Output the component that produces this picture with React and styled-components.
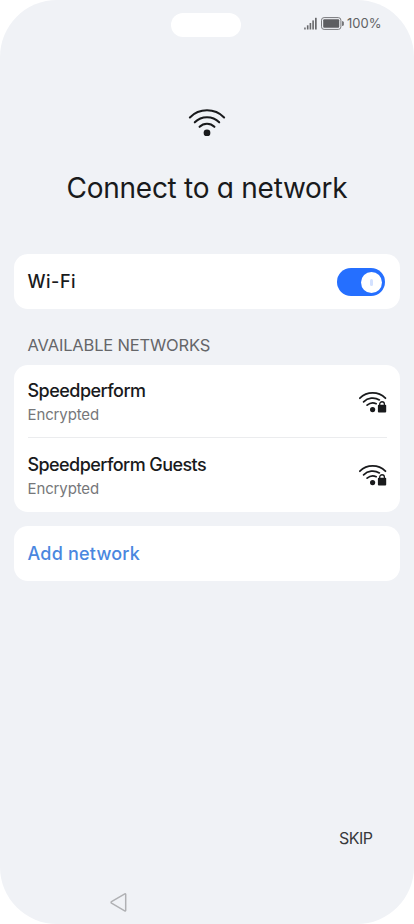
import React from "react";
import styled, { createGlobalStyle } from "styled-components";

const GlobalStyle = createGlobalStyle`
  * { box-sizing: border-box; }
  body { margin: 0; background: #fff; }
`;

const Screen = styled.main`
  width: 414px;
  height: 924px;
  background: #f0f2f6;
  border-radius: 57px;
  overflow: hidden;
  display: flex;
  flex-direction: column;
  font-family: Inter, "Noto Sans", sans-serif;
  font-feature-settings: "cv11";
  color: #191a1c;
`;

const StatusBar = styled.header`
  display: grid;
  grid-template-columns: 1fr 70px 1fr;
  height: 48px;
  padding: 12.5px 33px 0 31px;
`;

const CameraCutout = styled.div`
  grid-column: 2;
  height: 24.5px;
  border-radius: 13px;
  background: #fff;
`;

const StatusIcons = styled.div`
  display: flex;
  justify-content: flex-end;
  align-items: center;
  gap: 3px;
  height: 21px;
`;

const BatteryText = styled.span`
  width: 34px;
  font-size: 13px;
  line-height: 21px;
  letter-spacing: 0;
  color: #606164;
  white-space: nowrap;
`;

const Hero = styled.section`
  display: flex;
  flex-direction: column;
  align-items: center;
  padding-top: 56px;
  height: 206px;
`;

const Title = styled.h1`
  margin: 32px 0 0;
  font-size: 28px;
  line-height: 40px;
  font-weight: 400;
  letter-spacing: -0.27px;
  white-space: nowrap;
`;

const Card = styled.section`
  margin: 0 14px;
  padding: 0 13.5px;
  background: #fff;
  border-radius: 14px;
`;

const Row = styled.div`
  display: flex;
  align-items: center;
  justify-content: space-between;
  height: ${(p) => p.$height}px;
  padding-top: ${(p) => p.$inset || 0}px;
  border-bottom: ${(p) => (p.$divider ? "1px solid #ebecee" : "none")};
`;

const Label = styled.div`
  font-size: 18px;
  line-height: 24px;
  font-weight: 500;
  letter-spacing: ${(p) => p.$spacing || 0}px;
  color: ${(p) => (p.$link ? "#4a87df" : "inherit")};
  white-space: nowrap;
`;

const Detail = styled.div`
  font-size: 15px;
  line-height: 24px;
  letter-spacing: -0.12px;
  color: #76777a;
`;

const SectionTitle = styled.h2`
  margin: 0;
  padding: 24px 27.5px 0;
  height: 55.5px;
  font-size: 16.5px;
  line-height: 24px;
  font-weight: 400;
  letter-spacing: -0.17px;
  color: #656669;
  white-space: nowrap;
`;

const Gap = styled.div`
  height: 14px;
`;

const Toggle = styled.button`
  display: flex;
  align-items: center;
  justify-content: flex-end;
  width: 48px;
  height: 28px;
  margin-right: 1.5px;
  padding: 0 3px;
  border: 0;
  border-radius: 14px;
  background: #256fff;
`;

const Knob = styled.span`
  display: grid;
  place-items: center;
  width: 21px;
  height: 21px;
  border-radius: 50%;
  background: #fff;
`;

const KnobMark = styled.span`
  width: 2.5px;
  height: 7px;
  border-radius: 2px;
  background: #d3e1ff;
`;

const Footer = styled.footer`
  display: flex;
  flex-direction: column;
  flex: 1;
  justify-content: flex-end;
`;

const Skip = styled.button`
  align-self: flex-end;
  margin: 0 41.5px 40px 0;
  padding: 0;
  border: 0;
  background: none;
  color: #38393b;
  font: 400 16px/24px Inter, "Noto Sans", sans-serif;
  letter-spacing: -0.5px;
`;

const NavBar = styled.nav`
  height: 34px;
  padding: 0.5px 0 0 109px;
`;

const SignalIcon = () => (
  <svg width="14" height="13" viewBox="0 0 14 13" fill="#67686b">
    <rect x="0.2" y="10.5" width="1.5" height="2" />
    <rect x="2.9" y="8.3" width="1.6" height="4.2" />
    <rect x="5.6" y="6" width="1.6" height="6.5" />
    <rect x="8.3" y="3.4" width="1.6" height="9.1" />
    <rect x="11" y="0.8" width="1.7" height="11.7" />
  </svg>
);

const BatteryIcon = () => (
  <svg width="23" height="13" viewBox="0 0 23 13">
    <rect x="0.5" y="0.6" width="19.4" height="11.8" rx="2.6" fill="none" stroke="#77787b" />
    <rect x="2.2" y="2.3" width="16" height="8.4" rx="1" fill="#5d5e61" />
    <path d="M21.1 4v5q1.7 0 1.7-1.5v-2Q22.8 4 21.1 4" fill="#66676a" />
  </svg>
);

const WifiIcon = () => (
  <svg width="38" height="32" viewBox="0 0 38 32" fill="none" stroke="#191a1c" strokeWidth="2.1" strokeLinecap="round">
    <path d="M1.9 13.4A24.2 24.2 0 0 1 36.1 13.4" />
    <path d="M6.8 18.3A17.2 17.2 0 0 1 31.2 18.3" />
    <path d="M11.6 22.8A10.5 10.5 0 0 1 26.4 22.8" />
    <circle cx="19" cy="28.9" r="3.4" fill="#191a1c" stroke="none" />
  </svg>
);

const SecureWifiIcon = () => (
  <svg width="28" height="22" viewBox="0 0 28 22" fill="none" stroke="#191a1c" strokeWidth="1.75" strokeLinecap="round">
    <path d="M0.9 7.2A18.2 18.2 0 0 1 26.4 7.2" />
    <path d="M4.6 10.9A13.1 13.1 0 0 1 20.4 8.9" />
    <path d="M8.1 14.1Q12.5 10.4 17.2 12.7" />
    <circle cx="13.6" cy="18.6" r="2.6" fill="#191a1c" stroke="none" />
    <rect x="18.9" y="13.8" width="8.3" height="7.7" rx="1" fill="#191a1c" stroke="none" />
    <path d="M20.7 14.6v-1.5a2.35 2.35 0 0 1 4.7 0v1.5" strokeWidth="1.3" />
  </svg>
);

const BackIcon = () => (
  <svg width="19" height="21" viewBox="0 0 19 21">
    <path d="M2.5 10.6Q1.7 11.4 2.5 12.1L15.7 19.9Q16.7 20.3 16.7 19.3V3.4Q16.7 2.5 15.8 2.9Z" fill="none" stroke="#b0b1b4" strokeWidth="1.5" strokeLinejoin="round" />
  </svg>
);

const NetworkText = styled.div`
  padding-top: 3px;
`;

const Network = ({ name, spacing, height, inset, divider }) => (
  <Row $height={height} $inset={inset} $divider={divider}>
    <NetworkText>
      <Label $spacing={spacing}>{name}</Label>
      <Detail>Encrypted</Detail>
    </NetworkText>
    <SecureWifiIcon />
  </Row>
);

export default function App() {
  return (
    <Screen>
      <GlobalStyle />
      <StatusBar>
        <CameraCutout />
        <StatusIcons>
          <SignalIcon />
          <BatteryIcon />
          <BatteryText>100%</BatteryText>
        </StatusIcons>
      </StatusBar>
      <Hero>
        <WifiIcon />
        <Title>Connect to a network</Title>
      </Hero>
      <Card>
        <Row $height={55} $inset={1}>
          <Label $spacing={0.5}>Wi-Fi</Label>
          <Toggle aria-label="Wi-Fi">
            <Knob><KnobMark /></Knob>
          </Toggle>
        </Row>
      </Card>
      <SectionTitle>AVAILABLE NETWORKS</SectionTitle>
      <Card>
        <Network name="Speedperform" spacing={-0.53} height={73.5} inset={1.5} divider />
        <Network name="Speedperform Guests" spacing={-0.57} height={74} />
      </Card>
      <Gap />
      <Card>
        <Row $height={55}>
          <Label $link $spacing={0.2}>Add network</Label>
        </Row>
      </Card>
      <Footer>
        <Skip>SKIP</Skip>
        <NavBar><BackIcon /></NavBar>
      </Footer>
    </Screen>
  );
}
